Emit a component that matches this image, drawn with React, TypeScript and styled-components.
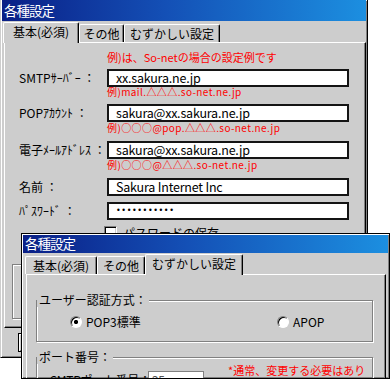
import React from "react";
import styled, { createGlobalStyle } from "styled-components";

const FACE = "#cdcdcd";

const GlobalStyle = createGlobalStyle`
  html, body { margin: 0; padding: 0; background: #ffffff; }
  body {
    font-family: "Noto Sans CJK JP", "Noto Sans", sans-serif;
    font-size: 12px;
    color: #000;
  }
  *, *::before, *::after { box-sizing: border-box; }
`;

const Desktop = styled.div`
  position: relative;
  width: 390px;
  height: 380px;
  overflow: hidden;
  background: #fff;
`;

const Window = styled.div<{ $x: number; $y: number; $w: number; $h: number; $front?: boolean }>`
  position: absolute;
  left: ${(p) => p.$x}px;
  top: ${(p) => p.$y}px;
  width: ${(p) => p.$w}px;
  height: ${(p) => p.$h}px;
  display: flex;
  flex-direction: column;
  overflow: hidden;
  background: ${FACE};
  border: 1px solid #000;
  border-top-width: ${(p) => (p.$front ? 1 : 0)}px;
  border-left-color: ${(p) => (p.$front ? "#000" : FACE)};
  padding: ${(p) => (p.$front ? "1px" : "0 1px")};
  box-shadow: inset 1px 1px 0 #fff, inset -1px -1px 0 #808080;
  z-index: ${(p) => (p.$front ? 2 : 1)};
`;

const TitleBar = styled.div<{ $h: number }>`
  flex: none;
  height: ${(p) => p.$h}px;
  display: flex;
  align-items: center;
  padding-left: 2px;
  background: linear-gradient(90deg, #0a1f86 0%, #1450b6 45%, #1c8fe0 100%);
  color: #fff;
  font-size: 13.5px;
  letter-spacing: -1px;
  line-height: 1;
`;

const TabStrip = styled.div<{ $indent: number }>`
  flex: none;
  height: 21px;
  display: flex;
  align-items: flex-end;
  padding-left: ${(p) => p.$indent}px;
  position: relative;
  z-index: 1;
`;

const Tab = styled.div<{ $w: number; $active?: boolean }>`
  width: ${(p) => p.$w}px;
  height: ${(p) => (p.$active ? 21 : 18)}px;
  margin-bottom: ${(p) => (p.$active ? -1 : 0)}px;
  padding-bottom: ${(p) => (p.$active ? 2 : 0)}px;
  display: flex;
  align-items: center;
  justify-content: center;
  background: ${FACE};
  border-top: 1px solid #fff;
  border-left: 1px solid #fff;
  border-right: 1px solid #000;
  border-top-left-radius: 2px;
  border-top-right-radius: 2px;
  box-shadow: inset -1px 0 0 #808080;
  font-size: 12px;
  line-height: 1;
  white-space: nowrap;
`;

const Panel = styled.div<{ $ml: number; $w: number; $h: number }>`
  flex: none;
  margin-left: ${(p) => p.$ml}px;
  width: ${(p) => p.$w}px;
  height: ${(p) => p.$h}px;
  display: flex;
  flex-direction: column;
  border-top: 1px solid #fff;
  border-left: 1px solid #fff;
  border-right: 1px solid #000;
  border-bottom: 1px solid #000;
  box-shadow: inset -1px -1px 0 #808080;
`;

const FormPanel = styled(Panel)`
  padding: 7px 0 0 14px;
`;

const Note = styled.div`
  margin-left: 88px;
  color: #ff0000;
  font-size: 11px;
  line-height: 14px;
  white-space: nowrap;
`;

const FieldRow = styled.div<{ $mt: number }>`
  display: grid;
  grid-template-columns: 88px 242px;
  align-items: center;
  height: 18px;
  margin-top: ${(p) => p.$mt}px;
`;

const Label = styled.span`
  font-size: 12px;
  line-height: 14px;
  white-space: nowrap;
`;

const TextBox = styled.div`
  height: 18px;
  display: flex;
  align-items: center;
  padding-left: 7px;
  background: #fff;
  border: 2px solid #141414;
  font-size: 12.5px;
  line-height: 14px;
  letter-spacing: -0.2px;
  white-space: nowrap;
  overflow: hidden;
`;

const Dots = styled.span`
  font-family: "DejaVu Sans", sans-serif;
  font-size: 8px;
  line-height: 14px;
  letter-spacing: 0.6px;
`;

const Hint = styled.div<{ $mt: number }>`
  margin-left: 88px;
  margin-top: ${(p) => p.$mt}px;
  color: #ff0000;
  font-size: 10px;
  letter-spacing: 0.4px;
  line-height: 8px;
  white-space: nowrap;
`;

const CheckRow = styled.div`
  display: flex;
  align-items: center;
  gap: 6px;
  height: 13px;
  margin: 6px 0 0 85px;
  font-size: 12px;
  line-height: 13px;
  white-space: nowrap;
`;

const CheckBox = styled.span`
  width: 13px;
  height: 13px;
  flex: none;
  background: #fff;
  border: 1px solid;
  border-color: #808080 #fff #fff #808080;
  box-shadow: inset 1px 1px 0 #000, inset -1px -1px 0 ${FACE};
`;

const BackFrame = styled.div`
  width: 340px;
  height: 55px;
  margin: 25px 0 0 -7px;
  border: 1px solid #808080;
  box-shadow: inset 1px 1px 0 #fff, 1px 1px 0 #fff;
`;

const ButtonRow = styled.div`
  flex: none;
  height: 29px;
  display: flex;
  gap: 6px;
  padding: 5px 0 0 16px;
`;

const PushButton = styled.div`
  width: 75px;
  height: 19px;
  display: flex;
  align-items: center;
  justify-content: center;
  border: 1px solid #000;
  box-shadow: inset 1px 1px 0 #fff, inset -1px -1px 0 #808080;
  font-size: 12px;
  line-height: 14px;
`;

const GroupPanel = styled(Panel)`
  padding-left: 9px;
`;

const Group = styled.fieldset<{ $mt: number; $h: number }>`
  margin: ${(p) => p.$mt}px 12px 0 0;
  padding: 0;
  min-width: 0;
  height: ${(p) => p.$h}px;
  flex: none;
  border: 1px solid #808080;
  box-shadow: inset 1px 1px 0 #fff, 1px 1px 0 #fff;
`;

const Legend = styled.legend`
  padding: 0 2px;
  font-size: 12px;
  line-height: 14px;
  background: ${FACE};
`;

const RadioRow = styled.div`
  display: grid;
  grid-template-columns: 207px auto;
  align-items: center;
  height: 14px;
  margin: 8px 0 0 33px;
`;

const RadioOption = styled.div`
  display: flex;
  align-items: center;
  gap: 4px;
  font-size: 12px;
  line-height: 14px;
  white-space: nowrap;
`;

const RadioDot = styled.span<{ $on?: boolean }>`
  width: 12px;
  height: 12px;
  flex: none;
  border-radius: 50%;
  border: 1px solid;
  border-color: #808080 #fff #fff #808080;
  background: ${(p) =>
    p.$on ? "radial-gradient(circle, #000 0 1.8px, #fff 2.4px)" : "#fff"};
  box-shadow: inset 1px 1px 0 #000;
`;

const PortGrid = styled.div`
  display: grid;
  grid-template-columns: 191px 140px;
  align-items: start;
`;

const PortRow = styled.div`
  display: grid;
  grid-template-columns: 98px 56px;
  align-items: center;
  margin: 7px 0 0 13px;
  font-size: 12px;
  line-height: 14px;
  letter-spacing: -0.3px;
  white-space: nowrap;
`;

const SmallBox = styled.div`
  height: 18px;
  display: flex;
  align-items: center;
  padding-left: 3px;
  background: #fff;
  border: 1px solid #808080;
  font-size: 12px;
  line-height: 14px;
  color: #555;
`;

const RedNote = styled.div`
  margin-top: -1px;
  color: #ff0000;
  font-size: 11px;
  line-height: 14px;
`;

type FieldProps = { label: string; mt: number; children: React.ReactNode };
const Field = ({ label, mt, children }: FieldProps) => (
  <FieldRow $mt={mt}>
    <Label>{label}</Label>
    <TextBox>{children}</TextBox>
  </FieldRow>
);

export default function App() {
  return (
    <>
      <GlobalStyle />
      <Desktop>
        <Window $x={0} $y={0} $w={368} $h={358}>
          <TitleBar $h={21}>各種設定</TitleBar>
          <TabStrip $indent={1}>
            <Tab $w={76} $active>基本(必須)</Tab>
            <Tab $w={45}>その他</Tab>
            <Tab $w={96}>むずかしい設定</Tab>
          </TabStrip>
          <FormPanel $ml={2} $w={362} $h={286}>
            <Note>例)は、So-netの場合の設定例です</Note>
            <Field label="SMTPｻｰﾊﾞｰ ：" mt={5}>xx.sakura.ne.jp</Field>
            <Hint $mt={1}>例)mail.△△△.so-net.ne.jp</Hint>
            <Field label="POPｱｶｳﾝﾄ ：" mt={8}>sakura@xx.sakura.ne.jp</Field>
            <Hint $mt={2}>例)○○○@pop.△△△.so-net.ne.jp</Hint>
            <Field label="電子ﾒｰﾙｱﾄﾞﾚｽ ：" mt={9}>sakura@xx.sakura.ne.jp</Field>
            <Hint $mt={2}>例)○○○@△△△.so-net.ne.jp</Hint>
            <Field label="名前 ：" mt={9}>Sakura Internet Inc</Field>
            <Field label="ﾊﾟｽﾜｰﾄﾞ ：" mt={6}>
              <Dots>•••••••••••</Dots>
            </Field>
            <CheckRow>
              <CheckBox />
              パスワードの保存
            </CheckRow>
            <BackFrame />
          </FormPanel>
          <ButtonRow>
            <PushButton>OK</PushButton>
            <PushButton>キャンセル</PushButton>
          </ButtonRow>
        </Window>

        <Window $x={21} $y={233} $w={369} $h={146} $front>
          <TitleBar $h={18}>各種設定</TitleBar>
          <TabStrip $indent={2}>
            <Tab $w={72}>基本(必須)</Tab>
            <Tab $w={48}>その他</Tab>
            <Tab $w={98} $active>むずかしい設定</Tab>
          </TabStrip>
          <GroupPanel $ml={3} $w={360} $h={200}>
            <Group $mt={18} $h={49}>
              <Legend>ユーザー認証方式：</Legend>
              <RadioRow>
                <RadioOption>
                  <RadioDot $on />
                  POP3標準
                </RadioOption>
                <RadioOption>
                  <RadioDot />
                  APOP
                </RadioOption>
              </RadioRow>
            </Group>
            <Group $mt={8} $h={100}>
              <Legend>ポート番号：</Legend>
              <PortGrid>
                <PortRow>
                  <span>SMTPポート番号：</span>
                  <SmallBox>25</SmallBox>
                </PortRow>
                <RedNote>*通常、変更する必要はありません</RedNote>
              </PortGrid>
            </Group>
          </GroupPanel>
        </Window>
      </Desktop>
    </>
  );
}
